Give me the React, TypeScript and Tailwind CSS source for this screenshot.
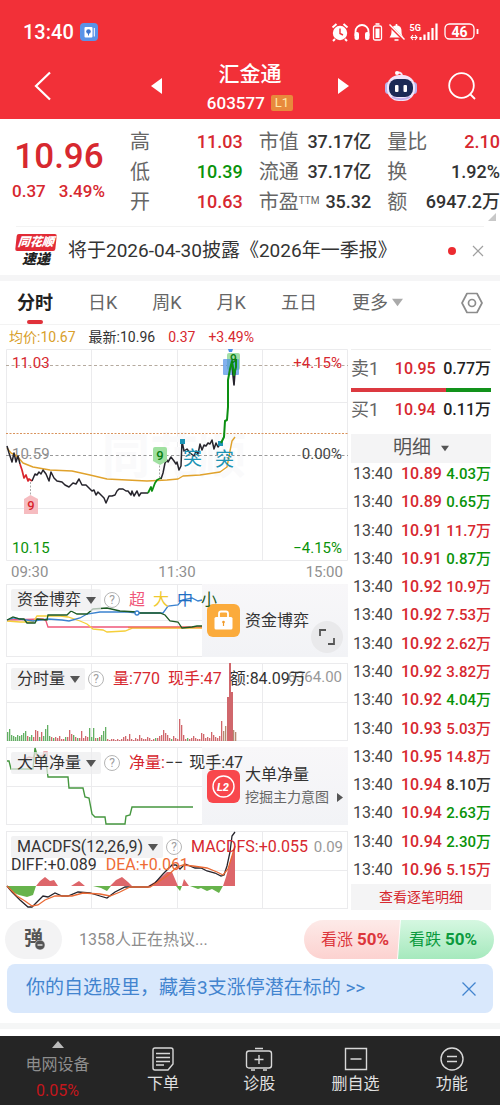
import { useState, type ReactNode } from 'react'

type Tone = 'up' | 'down' | 'flat'

const toneClass: Record<Tone, string> = {
  up: 'text-[#d7282f]',
  down: 'text-[#0a930a]',
  flat: 'text-[#333333]',
}

const quotes: Array<{ label: string; sup?: string; value: string; tone: Tone }> = [
  { label: '高', value: '11.03', tone: 'up' },
  { label: '市值', value: '37.17亿', tone: 'flat' },
  { label: '量比', value: '2.10', tone: 'up' },
  { label: '低', value: '10.39', tone: 'down' },
  { label: '流通', value: '37.17亿', tone: 'flat' },
  { label: '换', value: '1.92%', tone: 'flat' },
  { label: '开', value: '10.63', tone: 'up' },
  { label: '市盈', sup: 'TTM', value: '35.32', tone: 'flat' },
  { label: '额', value: '6947.2万', tone: 'flat' },
]

const tabs = ['分时', '日K', '周K', '月K', '五日']

const ticks: Array<{ price: string; volume: string; tone: Tone }> = [
  { price: '10.89', volume: '4.03万', tone: 'down' },
  { price: '10.89', volume: '0.65万', tone: 'down' },
  { price: '10.91', volume: '11.7万', tone: 'up' },
  { price: '10.91', volume: '0.87万', tone: 'down' },
  { price: '10.92', volume: '10.9万', tone: 'up' },
  { price: '10.92', volume: '7.53万', tone: 'up' },
  { price: '10.92', volume: '2.62万', tone: 'up' },
  { price: '10.92', volume: '3.82万', tone: 'up' },
  { price: '10.92', volume: '4.04万', tone: 'down' },
  { price: '10.93', volume: '5.03万', tone: 'up' },
  { price: '10.95', volume: '14.8万', tone: 'up' },
  { price: '10.94', volume: '8.10万', tone: 'flat' },
  { price: '10.94', volume: '2.63万', tone: 'down' },
  { price: '10.94', volume: '2.30万', tone: 'down' },
  { price: '10.96', volume: '5.15万', tone: 'up' },
]

// positive = buy side (red), negative = sell side (green)
const volumes = [
  -8, -11, -5, -4, -3, -5, -4, -5, -7, -9, 4, -3, -5, 3, 10, 9, -3, 8, -4, -11,
  -15, -4, 3, -2, 3, 2, 4, 1, 1, -3, 3, 10, 6, -5, 3, -2, 2, 9, 2, 4,
  3, -12, -3, -12, 2, -2, 3, -5, -9, -13, 1, 0, 1, 1, 0, 1, 0, 1, 3, 4,
  1, 6, 1, 0, 2, 1, 5, 2, 1, 1, 3, 2, 0, 1, -2, 2, 4, 5, 10, 7,
  5, 2, -1, 4, 2, 1, 21, 15, 5, 1, -2, 1, 2, 4, 2, 1, 1, 7, 6, 2,
  3, 2, 8, 5, 3, 2, 4, 19, 9, 14, 43, 78, 48, 10, 8,
]

const indicators = ['资金博弈', '分时量', '大单净量', 'MACDFS(12,26,9)']

function Grid({ height, rows }: { height: number; rows: number[] }) {
  return (
    <g stroke="#ebebed" strokeWidth="1" fill="none">
      <rect x="0.5" y="0.5" width="341" height={height - 1} />
      {[85.5, 171.5, 256.5].map(x => <line key={x} x1={x} x2={x} y1="0" y2={height} />)}
      {rows.map(y => <line key={y} x1="0" x2="342" y1={y} y2={y} />)}
    </g>
  )
}

function Down({ className }: { className: string }) {
  return <svg viewBox="0 0 10 7" className={className} aria-hidden="true"><path d="M0 0h10L5 7z" fill="currentColor" /></svg>
}

function StatusIcons() {
  return (
    <svg viewBox="0 0 150 22" className="h-[22px] w-[150px]" fill="none" stroke="#fff" strokeWidth="1.6">
      <circle cx="10" cy="12" r="7.2" fill="#fff" stroke="none" />
      <path d="M2.5 6.5l4-3.5M17.5 6.5l-4-3.5M5 18l-2 2M15 18l2 2" strokeWidth="2" />
      <path d="M10 7.5v5l3 1.5" stroke="#f23038" strokeWidth="1.4" />
      <path d="M25.5 15v-4.5a6.5 6.5 0 0 1 13 0V15" strokeWidth="1.8" />
      <rect x="24.5" y="11" width="4.5" height="8" rx="2" fill="#fff" stroke="none" />
      <rect x="35" y="11" width="4.5" height="8" rx="2" fill="#fff" stroke="none" />
      <rect x="43.5" y="5" width="8" height="14" rx="1.5" strokeWidth="1.3" />
      <path d="M45.5 3h4" />
      <rect x="45.5" y="7.5" width="4" height="9.5" fill="#fff" stroke="none" />
      <path d="M59.5 16.5h14c-1.5-2-2-3.5-2-6.5 0-4-2-5.5-5-5.5s-5 1.5-5 5.5c0 3-.5 4.5-2 6.5z" fill="#fff" stroke="none" />
      <path d="M66.5 3v2M64.5 19h4" />
      <path d="M58.5 3.5l15 15" stroke="#f23038" strokeWidth="2.6" />
      <path d="M59.5 3.5l15 15" strokeWidth="1.4" />
      <text x="79.5" y="9.5" fontSize="9" fontWeight="700" fill="#fff" stroke="none">5G</text>
      <path d="M81 16.5h6M83 14l-2 2.5 2 2.5M85 14l2 2.5-2 2.5" strokeWidth="1.2" />
      <path d="M90.5 19v-3M94.5 19v-5.5M98.5 19v-8M102.5 19V7M106.5 19V2.5" strokeWidth="2.2" />
      <rect x="115" y="3" width="29" height="15" rx="4.5" strokeWidth="1.3" />
      <path d="M147.5 8v5" strokeWidth="1.8" />
      <text x="129.5" y="15.5" fontSize="14" fontWeight="700" fill="#fff" stroke="none" textAnchor="middle">46</text>
    </svg>
  )
}

function Robot() {
  return (
    <svg viewBox="0 0 34 32" className="h-8 w-[34px]" aria-hidden="true">
      <path d="M18 6c0-2-1-3.5-4-3.5" stroke="#f4e4f4" strokeWidth="1.8" fill="none" />
      <circle cx="13" cy="3" r="2" fill="#fff" />
      <rect x="1" y="12" width="7" height="12" rx="3.5" fill="#b9b4ee" />
      <rect x="26" y="12" width="7" height="12" rx="3.5" fill="#b9b4ee" />
      <rect x="3" y="5" width="28" height="26" rx="12" fill="#f1e6fa" />
      <path d="M8 27c5 3 13 3 18 0" stroke="#c4b1ec" strokeWidth="2" fill="none" />
      <rect x="5" y="9" width="24" height="18" rx="8" fill="#1b2a55" />
      <rect x="11" y="15" width="3.5" height="7" rx="1" fill="#fff" />
      <rect x="19.5" y="15" width="3.5" height="7" rx="1" fill="#fff" />
    </svg>
  )
}

function Header() {
  return (
    <header className="bg-[#f23038] text-white">
      <div className="flex h-16 items-center justify-between pl-[23px] pr-5">
        <div className="flex items-center gap-[6px]">
          <span className="text-xl font-medium">13:40</span>
          <svg viewBox="0 0 18 18" className="size-[18px]" aria-hidden="true">
            <rect width="18" height="18" rx="4" fill="#5a93e8" />
            <rect x="4.5" y="4" width="8" height="10.5" rx="1" fill="#fff" />
            <path d="M14.3 5v8.5" stroke="#fff" />
            <circle cx="8.5" cy="8.5" r="2.3" fill="#3c74cf" />
            <path d="M8.5 9v3.5" stroke="#3c74cf" />
          </svg>
        </div>
        <StatusIcons />
      </div>
      <div className="grid h-[55px] grid-cols-[1fr_198px_1fr] items-start">
        <button aria-label="返回" className="ml-[33px] mt-[7px] w-fit">
          <svg viewBox="0 0 20 30" className="h-[30px] w-5" fill="none" stroke="#fff" strokeWidth="2.2"><path d="M17 1.5L3 15l14 13.5" /></svg>
        </button>
        <div className="flex items-start justify-between">
          <button aria-label="上一只" className="mt-[14px]"><svg viewBox="0 0 11 16" className="h-4 w-[11px]"><path d="M11 0v16L0 8z" fill="#fff" /></svg></button>
          <div className="text-center">
            <h1 className="-mt-1 text-[21px] font-medium leading-7">汇金通</h1>
            <div className="mt-[5px] flex items-center gap-[6px] text-[17px] font-medium leading-5">
              603577
              <span className="rounded-xs bg-[#e88a3c] px-1 text-[13px] font-normal leading-4 text-[#ffe9a8]">L1</span>
            </div>
          </div>
          <button aria-label="下一只" className="mt-[14px]"><svg viewBox="0 0 11 16" className="h-4 w-[11px]"><path d="M0 0v16l11-8z" fill="#fff" /></svg></button>
        </div>
        <div className="flex items-center justify-end gap-[30px] pr-6 pt-[6px]">
          <button aria-label="问财助手"><Robot /></button>
          <button aria-label="搜索">
            <svg viewBox="0 0 28 28" className="size-7" fill="none" stroke="#fff" strokeWidth="1.8"><circle cx="13.5" cy="13.5" r="12.3" /><path d="M22 22l5 5" /></svg>
          </button>
        </div>
      </div>
    </header>
  )
}

function Quote() {
  return (
    <section className="relative flex pb-[9px] pt-2">
      <div className={`w-[130px] shrink-0 pl-3 pt-[9px] ${toneClass.up}`}>
        <div className="w-[94px] text-center text-[35px] font-medium leading-[42px]">10.96</div>
        <div className="flex gap-[13px] text-[17px] font-medium leading-[26px]"><span>0.37</span><span>3.49%</span></div>
      </div>
      <dl className="grid flex-1 grid-cols-3 gap-x-4">
        {quotes.map(q => (
          <div key={q.label} className="flex justify-between whitespace-nowrap">
            <dt className="text-xl leading-[30px] text-[#666666]">{q.label}{q.sup && <sup className="text-[10px]">{q.sup}</sup>}</dt>
            <dd className={`text-lg font-medium leading-[30px] ${toneClass[q.tone]}`}>{q.value}</dd>
          </div>
        ))}
      </dl>
      <svg viewBox="0 0 8 8" className="absolute bottom-[5px] right-1 size-2" aria-hidden="true"><path d="M8 0v8H0z" fill="#c8c8c8" /></svg>
    </section>
  )
}

function News() {
  return (
    <section className="border-b-[6px] border-[#f5f5f6]">
      <div className="mx-4 flex h-[49px] items-center border-t border-[#f3f3f3]">
        <div className="w-10 text-center font-black italic">
          <div className="-skew-x-6 rounded-xs bg-[#e22b35] text-xs leading-[17px] text-white">同花顺</div>
          <div className="text-sm leading-[17px] text-[#222222]">速递</div>
        </div>
        <a href="#report" className="ml-3 flex-1 whitespace-nowrap text-[19px] text-[#333333]">将于2026-04-30披露《2026年一季报》</a>
        <span className="size-2 rounded-full bg-[#ec2b30]" />
        <button aria-label="关闭公告" className="ml-4">
          <svg viewBox="0 0 12 12" className="size-3" stroke="#a0a0a0" strokeWidth="1.2"><path d="M1 1l10 10M11 1L1 11" /></svg>
        </button>
      </div>
    </section>
  )
}

function Tabs() {
  const [active, setActive] = useState('分时')
  return (
    <nav className="flex h-11 items-center gap-[35px] border-b border-[#f3f3f3] pl-[17px] pr-4 text-lg text-[#666666]">
      {tabs.map(tab => (
        <button key={tab} onClick={() => setActive(tab)}
          className={`relative h-full whitespace-nowrap ${tab === active ? 'font-bold text-[#222222]' : ''}`}>
          {tab}
          {tab === active && <span className="absolute bottom-0 left-1/2 h-1 w-4 -translate-x-1/2 rounded-full bg-[#e0313a]" />}
        </button>
      ))}
      <button className="flex items-center gap-1 whitespace-nowrap">更多<Down className="h-[9px] w-[11px] text-[#aaaaaa]" /></button>
      <button aria-label="设置" className="ml-auto">
        <svg viewBox="0 0 24 22" className="h-[22px] w-6" fill="none" stroke="#8c8c8c" strokeWidth="1.7"><path d="M7 1.5h10l5 9.5-5 9.5H7L2 11z" strokeLinejoin="round" /><circle cx="12" cy="11" r="3.5" /></svg>
      </button>
    </nav>
  )
}

function PriceChart() {
  return (
    <div className="mb-0">
      <div className="relative text-[15px] leading-5">
        <svg viewBox="0 0 342 212" className="block w-full" fill="none" strokeLinejoin="round">
          <Grid height={212} rows={[53.5, 159.5]} />
          <text x="96" y="124" fontSize="48" fontWeight="700" fill="#fafafb">同花顺</text>
          <line x1="0" x2="342" y1="16.5" y2="16.5" stroke="#b5aa9f" strokeDasharray="3 2.5" />
          <line x1="0" x2="342" y1="84.5" y2="84.5" stroke="#d9935c" strokeDasharray="2 1.5" />
          <line x1="0" x2="342" y1="106.5" y2="106.5" stroke="#999999" strokeDasharray="3 2.5" />
          <text x="6" y="110" fontSize="15" fill="#8e8e8e">10.59</text>
          <polyline stroke="#e0a22c" strokeWidth="1.4" points="1,99 5,104 11,107 17,114 27,118 44,121 66,122 84,126 101,130 141,132 161,131 172,130 177,127 194,126 214,123 221,118 224,102 226,92 229,88" />
          <polyline stroke="#26242c" strokeWidth="1.5" points="1,97 3,104 6,113 8,104 10,113 12,107 14,115" />
          <polyline stroke="#d9262e" strokeWidth="1.7" points="14,115 16,121 18,129 20,126 22,132 23,130 26,132" />
          <polyline stroke="#26242c" strokeWidth="1.5" points="26,132 29,125 31,126 33,123 35,125 37,121 40,125 43,132 45,123 48,129 51,132 56,133 59,136 63,138 67,134 70,135 73,130 76,136 80,136 83,139 86,142 88,141 90,146 92,143 96,147 98,149 100,154 103,147 106,147 109,146 111,142 113,140 117,140 120,142 122,142 125,146 126,142 128,147 131,142 133,147 135,144 142,144" />
          <polyline stroke="#0c8f12" strokeWidth="1.8" points="142,144 145,138 146,142 149,134 151,131 155,129" />
          <polyline stroke="#26242c" strokeWidth="1.5" points="155,130 157,124 159,114 161,111 162,113 165,108 168,112 170,115 171,113 173,121 175,117 176,92 178,102 181,100 184,104 188,107 190,102 192,105 194,95 196,101 198,96 200,97 202,94 204,95 206,91 208,100 210,94 212,98 215,94" />
          <path d="M24.5 133v14M153.5 113v18" stroke="#aaaaaa" strokeDasharray="2 1.5" />
          <path d="M18 150l6.500-4 7.500 4v15H18z" fill="#f6bcc0" />
          <text x="25" y="161" fontSize="13" fontWeight="500" fill="#d9262e" textAnchor="middle">9</text>
          <path d="M147 100q0-2 2-2h10q2 0 2 2v12l-7 4-7-4z" fill="#9fe0a0" />
          <text x="154" y="111" fontSize="13" fontWeight="500" fill="#0a7d12" textAnchor="middle">9</text>
          <path d="M174 90h5v5h-5zM212 92h5v5h-5z" fill="#1c93b4" />
          <text x="177" y="116" fontSize="19" fill="#1c93b4">突</text>
          <text x="209" y="117" fontSize="19" fill="#1c93b4">突</text>
          <rect x="221" y="4" width="13" height="17" rx="2" fill="#a2dfa8" />
          <rect x="217" y="10" width="16" height="16" rx="1" fill="#4d8fe6" opacity="0.7" />
          <path d="M222 0h5l-1 3h-3z" fill="#4d8fe6" />
          <polyline stroke="#26242c" strokeWidth="1.7" points="226,14 227,26 228,36 229,22" />
          <polyline stroke="#0c8f12" strokeWidth="2" points="215,94 218,88 219,72 221,71 222,58 222,31 224,20 226,12 228,26 230,18 230,10" />
          <text x="227.5" y="14" fontSize="12" fontWeight="500" fill="#0a7d12" textAnchor="middle">9</text>
        </svg>
        <span className={`absolute left-[6px] top-1 ${toneClass.up}`}>11.03</span>
        <span className={`absolute right-[6px] top-1 ${toneClass.up}`}>+4.15%</span>
        <span className="absolute right-[6px] top-[95px] text-[#444444]">0.00%</span>
        <span className={`absolute bottom-[3px] left-[6px] ${toneClass.down}`}>10.15</span>
        <span className={`absolute bottom-[3px] right-[6px] ${toneClass.down}`}>−4.15%</span>
      </div>
      <div className="flex h-[23px] items-center justify-between px-[5px] text-[15px] text-[#909090]">
        <span>09:30</span><span>11:30</span><span>15:00</span>
      </div>
    </div>
  )
}

function Panel({ name, chart, locked, children }: { name: string; chart: ReactNode; locked?: ReactNode; children: ReactNode }) {
  return (
    <div className="relative">
      {chart}
      {locked && <div className="absolute inset-y-0 left-[196px] right-0 flex items-center gap-[5px] bg-linear-to-b from-[#f8f7f9] to-[#f2f3f6] pl-[5px]">{locked}</div>}
      <div className="absolute inset-x-[5px] top-[5px] flex flex-wrap items-center whitespace-nowrap text-base leading-[22px] text-[#333333]">
        <label className="relative">
          <select aria-label="指标" defaultValue={name} className="block h-[22px] appearance-none rounded-xs bg-[#ececee]/70 pl-[6px] pr-5 leading-[22px] [field-sizing:content]">
            {indicators.map(item => <option key={item}>{item}</option>)}
          </select>
          <Down className="pointer-events-none absolute right-[5px] top-2 h-[7px] w-[10px] text-[#555555]" />
        </label>
        <button aria-label="说明" className="mx-[3px] size-4 rounded-full border border-[#b5b5b5] text-xs leading-[14px] text-[#a0a0a0]">?</button>
        {children}
      </div>
    </div>
  )
}

function FundPanel() {
  return (
    <Panel
      name="资金博弈"
      chart={
        <svg viewBox="0 0 342 73" className="block w-full" fill="none" strokeWidth="1.3">
          <Grid height={73} rows={[36.5]} />
          <polyline stroke="#f0577a" points="1,36 37,35 40,37 42,43 196,43" />
          <polyline stroke="#f5cf3a" points="1,37 14,38 27,38 31,32 54,32 62,33 74,37 81,40 87,45 97,46 101,48 119,47 127,44 196,44" />
          <polyline stroke="#f08a4b" points="122,43.5 196,43.5" />
          <polyline stroke="#3b82d0" points="1,36 8,34 14,35 27,37 42,35 56,36 63,37 74,34 81,30 94,28 107,28 122,28 131,29 157,29 162,22 172,21 176,16 186,14 192,17 196,16" />
          <polyline stroke="#1d5a24" points="1,36 7,33 14,35 18,35 21,39 29,39 31,35 41,36 42,31 61,31 65,27 71,30 81,30 87,25 101,24 114,27 131,28 134,29 154,29 159,31 164,37 172,38 176,44 186,43 191,42 196,42" />
          <circle cx="131" cy="29" r="2" stroke="#3b82d0" fill="#fff" />
        </svg>
      }
      locked={
        <>
          <svg viewBox="0 0 33 33" className="size-[33px] shrink-0" aria-hidden="true">
            <rect width="33" height="33" rx="6" fill="#fbab3c" />
            <rect x="7.5" y="13" width="18" height="12.5" rx="1.5" fill="#fff" />
            <path d="M12 14V9.5q0-2 2-2h5q2 0 2 2V14" fill="none" stroke="#fff" strokeWidth="1.8" />
            <circle cx="16.5" cy="18" r="1.3" fill="#f09a28" />
            <path d="M16.5 18v4" stroke="#f09a28" strokeWidth="1.2" />
          </svg>
          <span className="text-base text-[#333333]">资金博弈</span>
          <button aria-label="全屏" className="absolute bottom-1 right-[5px] flex size-8 items-center justify-center rounded-full bg-[#e9e9eb]">
            <svg viewBox="0 0 18 18" className="size-[18px]" fill="none" stroke="#555555" strokeWidth="1.8"><path d="M2 8V2h6M16 10v6h-6" /></svg>
          </button>
        </>
      }
    >
      <span className="ml-[6px] flex gap-2">
        <span className="text-[#f0577a]">超</span>
        <span className="text-[#f0c92e]">大</span>
        <span className="text-[#1f6fc4]">中</span>
        <span className="text-[#1d5a24]">小</span>
      </span>
    </Panel>
  )
}

function VolumePanel() {
  return (
    <Panel
      name="分时量"
      chart={
        <svg viewBox="0 0 342 78" className="block w-full">
          <Grid height={78} rows={[39.5]} />
          <text x="336" y="19" fontSize="15" fill="#999999" textAnchor="end">6364.00</text>
          {volumes.map((v, i) => (
            <rect key={i} x={i * 2 + 1} y={77 - Math.abs(v)} width={Math.abs(v) > 40 ? 2 : 1.3} height={Math.abs(v) + 1} fill={v < 0 ? '#63b063' : i > 107 && Math.abs(v) < 15 ? '#b58a72' : '#d0676c'} />
          ))}
        </svg>
      }
    >
      <span className="ml-[6px] flex gap-2">
        <span className={toneClass.up}>量:770</span>
        <span className={toneClass.up}>现手:47</span>
        <span>额:84.09万</span>
      </span>
    </Panel>
  )
}

function NetPanel() {
  return (
    <Panel
      name="大单净量"
      chart={
        <svg viewBox="0 0 342 78" className="block w-full" fill="none" strokeWidth="1.4">
          <Grid height={78} rows={[39.5]} />
          <polyline stroke="#e08a8e" points="17,13 23,10 27,11 29,6 31,9 37,9 38,5 41,5 41,14" />
          <polyline stroke="#45973f" points="1,14 3,14 5,22 27,22 29,1 31,8 33,9 37,12 39,8 42,30 62,30 63,41 77,41 79,50 83,51 86,67 89,70 99,70 100,77 119,77 120,69 124,68 126,60 154,60 187,60" />
        </svg>
      }
      locked={
        <>
          <svg viewBox="0 0 33 33" className="size-[33px] shrink-0" aria-hidden="true">
            <rect width="33" height="33" rx="6" fill="#f8474c" />
            <circle cx="16.5" cy="16.5" r="10.5" fill="none" stroke="#fff" strokeWidth="1.4" />
            <text x="16" y="20.5" fontSize="11" fontWeight="800" fontStyle="italic" fill="#fff" textAnchor="middle">L2</text>
          </svg>
          <a href="#level2" className="whitespace-nowrap text-[#333333]">
            <span className="block text-base leading-[22px]">大单净量</span>
            <span className="flex items-center gap-2 text-sm leading-[22px] text-[#666666]">挖掘主力意图
              <svg viewBox="0 0 6 9" className="h-[9px] w-[6px]"><path d="M0 0v9l6-4.5z" fill="#555555" /></svg>
            </span>
          </a>
        </>
      }
    >
      <span className="ml-[6px] flex gap-[6px]">
        <span><span className={toneClass.up}>净量:</span>−−</span>
        <span>现手:47</span>
      </span>
    </Panel>
  )
}

function MacdPanel() {
  return (
    <Panel
      name="MACDFS(12,26,9)"
      chart={
        <svg viewBox="0 0 342 78" className="block w-full" fill="none" strokeWidth="1.3">
          <Grid height={78} rows={[39.5]} />
          <path d="M1 55l5 6 7 3 8 2 6-2 3-9zM87 55l8 2 6 3 4-5zM170 55l4 5 2-5zM184 55l8 3 3-1 6 3 5-2 7 4 4-7z" fill="#67b34c" />
          <path d="M30 55l4-5 5-4 5 4 4-1 4 6zM65 55l8-5 6 5zM104 55l6-6 6-3 6 5 4 4zM142 55l10-6 9-8h5l6 14zM176 55l2-7 5 7zM217 55l3-9 4-15 5-16v40z" fill="#dd666a" />
          <polyline stroke="#26242c" points="1,55 6,61 14,69 22,76 26,76 31,71 37,65 42,66 49,62 56,65 62,65 72,61 84,62 94,65 101,67 109,61 119,56 142,56 149,52 157,43 166,34 170,34 174,38 179,33 189,37 195,37 201,40 209,42 215,45 218,44 221,35 224,21 226,5 229,1" />
          <polyline stroke="#ea6a35" points="1,55 11,65 19,70 26,75 32,74 39,69 49,65 66,65 77,62 94,63 104,65 114,61 124,56 144,56 152,51 161,45 171,36 177,34 187,35 201,37 211,41 217,44 222,38 226,25 229,15" />
        </svg>
      }
    >
      <span className={`ml-[6px] ${toneClass.up}`}>MACDFS:+0.055</span>
      <span className="ml-auto text-[15px] text-[#999999]">0.09</span>
      <span className="-mt-1 flex w-full gap-[9px]"><span>DIFF:+0.089</span><span className="text-[#ee6c36]">DEA:+0.061</span></span>
    </Panel>
  )
}

function OrderBook() {
  return (
    <aside className="flex w-[140px] shrink-0 flex-col whitespace-nowrap">
      <div className="flex h-[39px] items-center justify-between border-t border-[#eeeeee] text-base font-medium text-[#222222]">
        <span className="text-lg font-normal text-[#666666]">卖1</span><span className={`ml-2 ${toneClass.up}`}>10.95</span><span>0.77万</span>
      </div>
      <div className="flex h-1"><div className="w-[68%] bg-[#dc3940]" /><div className="flex-1 bg-[#12921b]" /></div>
      <div className="flex h-9 items-center justify-between text-base font-medium text-[#222222]">
        <span className="text-lg font-normal text-[#666666]">买1</span><span className={`ml-2 ${toneClass.up}`}>10.94</span><span>0.11万</span>
      </div>
      <button className="mt-[6px] flex h-[29px] shrink-0 items-center justify-center gap-[10px] bg-[#f4f4f5] text-[19px] text-[#555555]">明细<Down className="h-[7px] w-2 text-[#555555]" /></button>
      <table className="-mt-[3px] h-[424px] w-full">
        <tbody>
          {ticks.map((t, i) => (
            <tr key={i}>
              <td className="w-[50px] p-0 pl-[2px] text-base leading-5 text-[#444444]">13:40</td>
              <td className={`p-0 text-base font-medium leading-5 ${toneClass.up}`}>{t.price}</td>
              <td className={`p-0 text-right text-[15px] font-medium leading-5 ${toneClass[t.tone]}`}>{t.volume}</td>
            </tr>
          ))}
        </tbody>
      </table>
      <button className={`h-[26px] bg-[#f4f4f5] text-sm ${toneClass.up}`}>查看逐笔明细</button>
    </aside>
  )
}

function ChatRow() {
  return (
    <section className="mt-[10px] flex items-center pl-[5px] pr-[6px]">
      <button aria-label="弹幕" className="relative h-[39px] w-[57px] rounded-full bg-[#f3f3f4] text-[19px] font-bold text-[#555555]">
        弹
        <svg viewBox="0 0 10 10" className="absolute bottom-[9px] right-[17px] size-[10px]"><circle cx="5" cy="5" r="5" fill="#555555" stroke="#f3f3f4" strokeWidth="0.5" /><path d="M2.5 5h5" stroke="#fff" strokeWidth="1.2" /></svg>
      </button>
      <a href="#talk" className="ml-[17px] flex-1 text-base text-[#8c8c8c]">1358人正在热议...</a>
      <div className="flex h-[39px] w-[190px] overflow-hidden rounded-full text-base">
        <button className="flex-1 bg-linear-to-b from-[#fdeae8] to-[#fcd2d0] pl-[6px] text-[#dc363c] [clip-path:polygon(0_0,100%_0,97%_100%,0_100%)]">看涨 <b className="text-[17px]">50%</b></button>
        <button className="-ml-[2px] flex-1 bg-linear-to-b from-[#d5f7e1] to-[#a5e9bd] pr-[6px] text-[#0b9a3e] [clip-path:polygon(3%_0,100%_0,100%_100%,0_100%)]">看跌 <b className="text-[17px]">50%</b></button>
      </div>
    </section>
  )
}

const navItems = [
  { label: '下单', icon: <path d="M6 3h16q2 0 2 2v14l-5 6H6q-2 0-2-2V5q0-2 2-2zM7 8.5h14M7 12.5h14M7 16.5h14M7 20h8" /> },
  { label: '诊股', icon: <path d="M4 6h20q2.5 0 2.5 2.5v12q0 2.5-2.5 2.5H4q-2.5 0-2.5-2.5v-12Q1.5 6 4 6zM10 3.5h8M14 10v9M9.5 14.5h9M6 25h4M18 25h4" /> },
  { label: '删自选', icon: <path d="M3.5 3.5h21v21h-21zM8.5 14h11" /> },
  { label: '功能', icon: <path d="M14 3a11 11 0 1 0 0 22 11 11 0 0 0 0-22zM9 11.5h10M9 16.5h10" /> },
]

function BottomNav() {
  return (
    <nav className="flex h-[69px] bg-[#252525] text-base text-[#e0e0e0]">
      <a href="#sector" className="flex w-[115px] flex-col items-center pt-[5px] text-[#8e8e8e]">
        <svg viewBox="0 0 12 7" className="h-[7px] w-3"><path d="M0 7h12L6 0z" fill="#bbbbbb" /></svg>
        <span className="mt-[6px] leading-[22px]">电网设备</span>
        <span className="mt-1 leading-[22px] text-[#c4161c]">0.05%</span>
      </a>
      {navItems.map(item => (
        <a key={item.label} href="#nav" className="flex flex-1 flex-col items-center pt-[9px]">
          <svg viewBox="0 0 28 28" className="size-7" fill="none" stroke="#d8d8d8" strokeWidth="1.4" aria-hidden="true">{item.icon}</svg>
          <span className="leading-[22px]">{item.label}</span>
        </a>
      ))}
    </nav>
  )
}

export default function App() {
  return (
    <div className="bg-white font-['Roboto','Noto_Sans_CJK_SC',sans-serif]">
      <Header />
      <Quote />
      <News />
      <Tabs />
      <div className="flex h-6 items-center gap-[13px] pl-[9px] text-sm text-[#333333]">
        <span className="text-[#d9a02b]">均价:10.67</span>
        <span>最新:10.96</span>
        <span className={toneClass.up}>0.37</span>
        <span className={toneClass.up}>+3.49%</span>
      </div>
      <main className="flex gap-[3px] pl-[6px] pr-[9px]">
        <div className="min-w-0 flex-1 space-y-[6px]">
          <PriceChart />
          <FundPanel />
          <VolumePanel />
          <NetPanel />
          <MacdPanel />
        </div>
        <OrderBook />
      </main>
      <ChatRow />
      <div className="mx-[7px] mt-[5px] flex h-[49px] items-center justify-between rounded-lg bg-[#d9e8fc] pl-[19px] pr-[17px] text-[#4284cf]">
        <a href="#picks" className="whitespace-nowrap text-[19px]">你的自选股里，藏着3支涨停潜在标的 &gt;&gt;</a>
        <button aria-label="关闭提示"><svg viewBox="0 0 14 14" className="size-[14px]" stroke="currentColor" strokeWidth="1.3"><path d="M.5.5l13 13M13.5.5l-13 13" /></svg></button>
      </div>
      <div className="mb-[7px] mt-[10px] h-[6px] bg-[#f5f6f6]" />
      <BottomNav />
    </div>
  )
}
